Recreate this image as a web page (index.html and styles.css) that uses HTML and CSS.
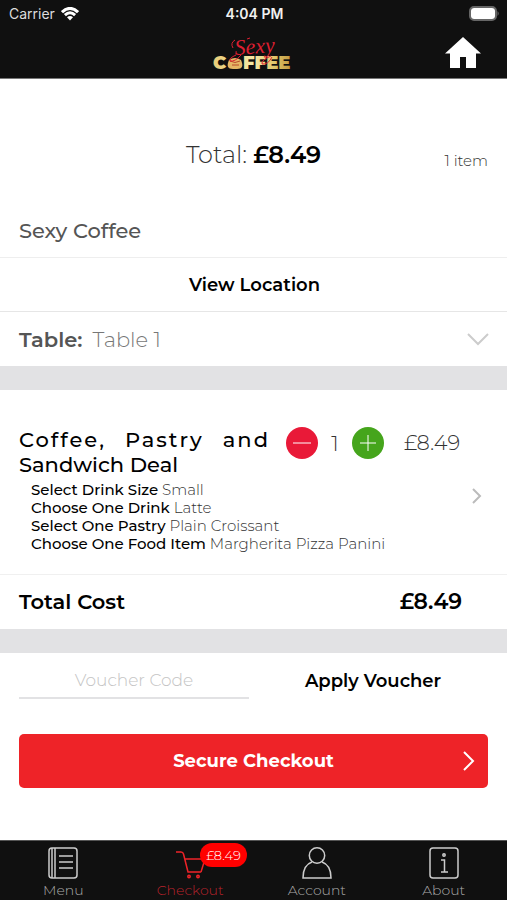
FILE: index.html
```html
<!DOCTYPE html>
<html lang="en">
<head>
<meta charset="utf-8">
<meta name="viewport" content="width=device-width, initial-scale=1">
<title>Checkout</title>
<link rel="stylesheet" href="styles.css">
</head>
<body>
<header class="top">
  <div class="status">
    <div class="carrier">Carrier
      <svg class="wifi" viewBox="0 0 18 14" aria-hidden="true"><path d="M1 5.200Q9-2.400 17 5.200M3.900 8.100Q9 3.400 14.100 8.100" /><path class="solid" d="M9 13.500L6 10.300Q9 7.800 12 10.300Z"/></svg>
    </div>
    <div class="clock">4:04 PM</div>
    <svg class="battery" viewBox="0 0 31 15" aria-hidden="true"><rect class="case" x="1" y="1" width="26" height="13" rx="4"/><rect class="charge" x="2" y="2" width="24" height="11" rx="3"/><path class="cap" d="M28.500 5Q31 7.500 28.500 10Z"/></svg>
  </div>
  <div class="brand-bar">
    <svg class="logo" viewBox="0 -6 84 50" role="img" aria-label="Sexy Coffee">
      <defs><linearGradient id="gold" gradientUnits="userSpaceOnUse" x1="0" y1="0" x2="84" y2="0"><stop offset="0" stop-color="#e9cc78"/><stop offset=".5" stop-color="#f5e9a5"/><stop offset=".75" stop-color="#dfc568"/><stop offset="1" stop-color="#b98b35"/></linearGradient></defs>
      <text class="logo-coffee" x="1" y="35">C</text>
      <text class="logo-coffee" x="31" y="35">FFEE</text>
      <path d="M17 26Q23 22 29 26Q33 35 25 35H21Q13 35 17 26Z" fill="#e5b765"/>
      <path class="bean" d="M18 27Q23 30 28 27M20 31H27"/>
      <text class="logo-sexy" x="23" y="21" transform="rotate(-4 23 21)">Sexy</text>
      <path class="swash" d="M23 6Q18 9 21 14M24 21Q17 24 18 27Q23 28 29 21M35 5L38 4M60 23Q56 31 50 30Q49 26 59 22"/>
    </svg>
    <a class="home" href="#" aria-label="Home"><svg viewBox="0 0 36 32" aria-hidden="true"><path d="M18 0L36 16.500H31V31H21V20H15V31H5V16.500H0Z"/></svg></a>
  </div>
</header>
<main>
  <section class="summary">
    <h1 class="total">Total: <strong>£8.49</strong></h1>
    <span class="count">1 item</span>
  </section>
  <h2 class="venue">Sexy Coffee</h2>
  <button class="row location" type="button">View Location</button>
  <button class="row table" type="button"><span class="table-label">Table:</span><span class="table-value">Table 1</span>
    <svg class="down" viewBox="0 0 24 14" aria-hidden="true"><path d="M2 2L12 12L22 2"/></svg>
  </button>
  <div class="band"></div>
  <section class="item">
    <div class="item-head">
      <h3 class="item-name"><span class="spread">Coffee, Pastry and</span> <span>Sandwich Deal</span></h3>
      <div class="stepper">
        <button class="round minus" type="button" aria-label="Remove one"><svg viewBox="0 0 32 32" aria-hidden="true"><path d="M7 16H25"/></svg></button>
        <span class="quantity">1</span>
        <button class="round plus" type="button" aria-label="Add one"><svg viewBox="0 0 32 32" aria-hidden="true"><path d="M8 16H24M16 8V24"/></svg></button>
      </div>
      <span class="price">£8.49</span>
    </div>
    <div class="options">
      <ul>
        <li><b>Select Drink Size</b> Small</li>
        <li><b>Choose One Drink</b> Latte</li>
        <li><b>Select One Pastry</b> Plain Croissant</li>
        <li><b>Choose One Food Item</b> Margherita Pizza Panini</li>
      </ul>
      <a class="edit" href="#" aria-label="Edit item"><svg viewBox="0 0 10 16" aria-hidden="true"><path d="M1 1L8 8L1 15"/></svg></a>
    </div>
  </section>
  <div class="cost"><span>Total Cost</span><span class="cost-value">£8.49</span></div>
  <div class="band"></div>
  <form class="voucher">
    <input type="text" placeholder="Voucher Code" aria-label="Voucher Code">
    <button type="button">Apply Voucher</button>
  </form>
  <button class="checkout" type="button">Secure Checkout
    <svg class="go" viewBox="0 0 12 20" aria-hidden="true"><path d="M1 1L10 10L1 19"/></svg>
  </button>
</main>
<nav class="tabs">
  <a href="#"><svg viewBox="0 0 32 32" aria-hidden="true"><rect x="2" y="1" width="28" height="30" rx="3"/><path d="M5 1V31M8 1V31M12 9H26M12 15H26M12 21H26"/></svg><span>Menu</span></a>
  <a href="#" class="active"><span class="icon-wrap"><svg viewBox="0 0 32 32" aria-hidden="true"><path d="M2 5H7Q9 5 9.500 7L14 25H27M10.500 12H31L27 25"/><circle cx="15" cy="29.500" r="1.200"/><circle cx="24" cy="29.500" r="1.200"/></svg><span class="badge">£8.49</span></span><span>Checkout</span></a>
  <a href="#"><svg viewBox="0 0 32 32" aria-hidden="true"><circle cx="16" cy="8.500" r="7.700"/><path d="M11 15Q2 18 2 31H30Q30 18 21 15"/></svg><span>Account</span></a>
  <a href="#"><svg viewBox="0 0 32 32" aria-hidden="true"><rect x="2" y="1" width="28" height="30" rx="3"/><path d="M13 13H16.500V25M13 25H20"/><circle cx="16" cy="8" r="1.200"/></svg><span>About</span></a>
</nav>
</body>
</html>
```
FILE: styles.css
```css
* { box-sizing: border-box; }
body {
  margin: 0;
  min-height: 100vh;
  display: flex;
  flex-direction: column;
  background: #fff;
  color: #111;
  font-family: Montserrat, Inter, sans-serif;
  font-size: 21px;
}
h1, h2, h3, ul { margin: 0; padding: 0; font-weight: 500; }
button, input { border: 0; background: none; padding: 0; font: inherit; color: inherit; }
a { color: inherit; text-decoration: none; }
svg { display: block; fill: none; stroke: currentColor; }

.top { background: #101010; color: #fff; border-bottom: 1px solid #777; }
.status {
  display: grid;
  grid-template-columns: 1fr auto 1fr;
  align-items: center;
  height: 27px;
  padding: 0 7px 0 9px;
  font: 500 14px/27px Inter, sans-serif;
  color: #f0f0f0;
}
.clock { font-weight: 600; }
.carrier { display: flex; gap: 6px; align-items: center; font-weight: 400; color: #ddd; }
.wifi { width: 18px; height: 14px; stroke: #fff; stroke-width: 3; }
.wifi .solid { fill: #fff; stroke: none; }
.battery { width: 31px; height: 15px; justify-self: end; stroke: none; }
.battery .case { stroke: #666; stroke-width: 2; }
.battery .charge { fill: #fff; }
.battery .cap { fill: #666; }
.brand-bar {
  display: grid;
  grid-template-columns: 1fr auto 1fr;
  align-items: center;
  height: 51px;
  padding: 0 26px;
}
.logo { grid-column: 2; width: 84px; height: 50px; stroke: none; }
.logo-coffee { font: 900 18px Montserrat, Inter, sans-serif; fill: url(#gold); }
.logo-sexy { font: italic 400 22px "Liberation Serif", serif; fill: #dc1f31; }
.swash { stroke: #dc1f31; stroke-width: 1; }
.bean { stroke: #b84a2c; }
.home { justify-self: end; }
.home svg { width: 36px; height: 32px; fill: #fff; stroke: none; }

main { flex: 1; }
.summary {
  display: grid;
  grid-template-columns: 1fr auto 1fr;
  align-items: center;
  height: 125px;
  padding: 26px 19px 0;
}
.total { grid-column: 2; font-size: 24px; font-weight: 300; color: #333; }
.total strong { font-weight: 600; color: #000; }
.count { justify-self: end; padding-top: 12px; font-size: 15px; font-weight: 300; color: #333; }
.venue { padding: 0 19px; font-size: 21px; line-height: 53px; color: #555; border-bottom: 1px solid #eee; }
.row { display: flex; align-items: center; width: 100%; height: 54px; padding: 0 17px 0 19px; }
.location { justify-content: center; font-size: 18px; font-weight: 600; color: #000; border-bottom: 1px solid #e6e6e6; }
.table { gap: 10px; color: #555; }
.table-label { font-weight: 600; }
.table-value { font-weight: 300; color: #777; }
.down { width: 24px; height: 14px; margin-left: auto; stroke: #ccc; stroke-width: 2; }
.band { height: 24px; background: #e2e2e4; }

.item { padding: 37px 19px 21px; }
.item-head { display: flex; align-items: flex-start; }
.item-name { flex: 1; font-size: 21px; line-height: 25px; color: #000; }
.item-name span { display: block; }
.item-name .spread { text-align: justify; text-align-last: justify; letter-spacing: 2px; margin-right: -2px; }
.stepper { display: flex; align-items: center; gap: 12px; margin-left: 18px; }
.round { width: 32px; height: 32px; border-radius: 50%; color: #fff; }
.round svg { width: 32px; height: 32px; stroke-width: 1; }
.minus { background: #e91938; }
.plus { background: #45a51c; }
.quantity { min-width: 10px; text-align: center; font-weight: 300; color: #333; }
.price { width: 104px; padding-left: 20px; line-height: 32px; font-weight: 300; color: #333; }
.options { display: flex; align-items: center; justify-content: space-between; padding: 4px 6px 0 12px; }
.options ul { list-style: none; font-size: 15px; line-height: 18px; font-weight: 300; color: #333; }
.options b { font-weight: 500; color: #000; }
.edit { align-self: flex-start; padding-top: 7px; color: #bbb; }
.edit svg { width: 10px; height: 16px; stroke-width: 2; }
.cost {
  display: flex;
  justify-content: space-between;
  padding: 0 45px 0 19px;
  border-top: 1px solid #f0f0f0;
  font-weight: 600;
  line-height: 54px;
  color: #000;
}
.cost-value { font-size: 22px; }
.voucher { display: grid; grid-template-columns: 230fr 239fr; padding: 9px 19px 0; }
.voucher input {
  width: 100%;
  height: 37px;
  border-bottom: 2px solid #e2e2e4;
  text-align: center;
  font-size: 17px;
  font-weight: 300;
  outline: 0;
}
.voucher input::placeholder { color: #c4c4c4; opacity: 1; }
.voucher button { padding-left: 9px; font-size: 18px; font-weight: 600; color: #000; }
.checkout {
  display: grid;
  grid-template-columns: 1fr auto 1fr;
  align-items: center;
  width: calc(100% - 38px);
  height: 54px;
  margin: 35px 19px 0;
  padding: 0 13px;
  border-radius: 5px;
  background: #ee2328;
  color: #fff;
  font-size: 18px;
  font-weight: 700;
}
.checkout::before { content: ""; }
.go { justify-self: end; width: 12px; height: 20px; stroke-width: 2; }

.tabs {
  display: grid;
  grid-template-columns: repeat(4, 1fr);
  height: 60px;
  background: #101010;
  border-top: 1px solid #555;
  color: #aaa;
  font-size: 14px;
  font-weight: 300;
  line-height: 18px;
}
.tabs a { display: flex; flex-direction: column; align-items: center; gap: 2px; padding-top: 6px; }
.tabs svg { width: 32px; height: 32px; stroke: #ccc; stroke-width: 1.5; }
.tabs .active { color: #b8232c; }
.tabs .active svg { stroke: #ee2328; }
.icon-wrap { position: relative; }
.badge {
  position: absolute;
  left: 26px;
  top: -4px;
  padding: 0 6px;
  border-radius: 12px;
  background: #f00;
  color: #fff;
  font-size: 13px;
  line-height: 24px;
}
```
